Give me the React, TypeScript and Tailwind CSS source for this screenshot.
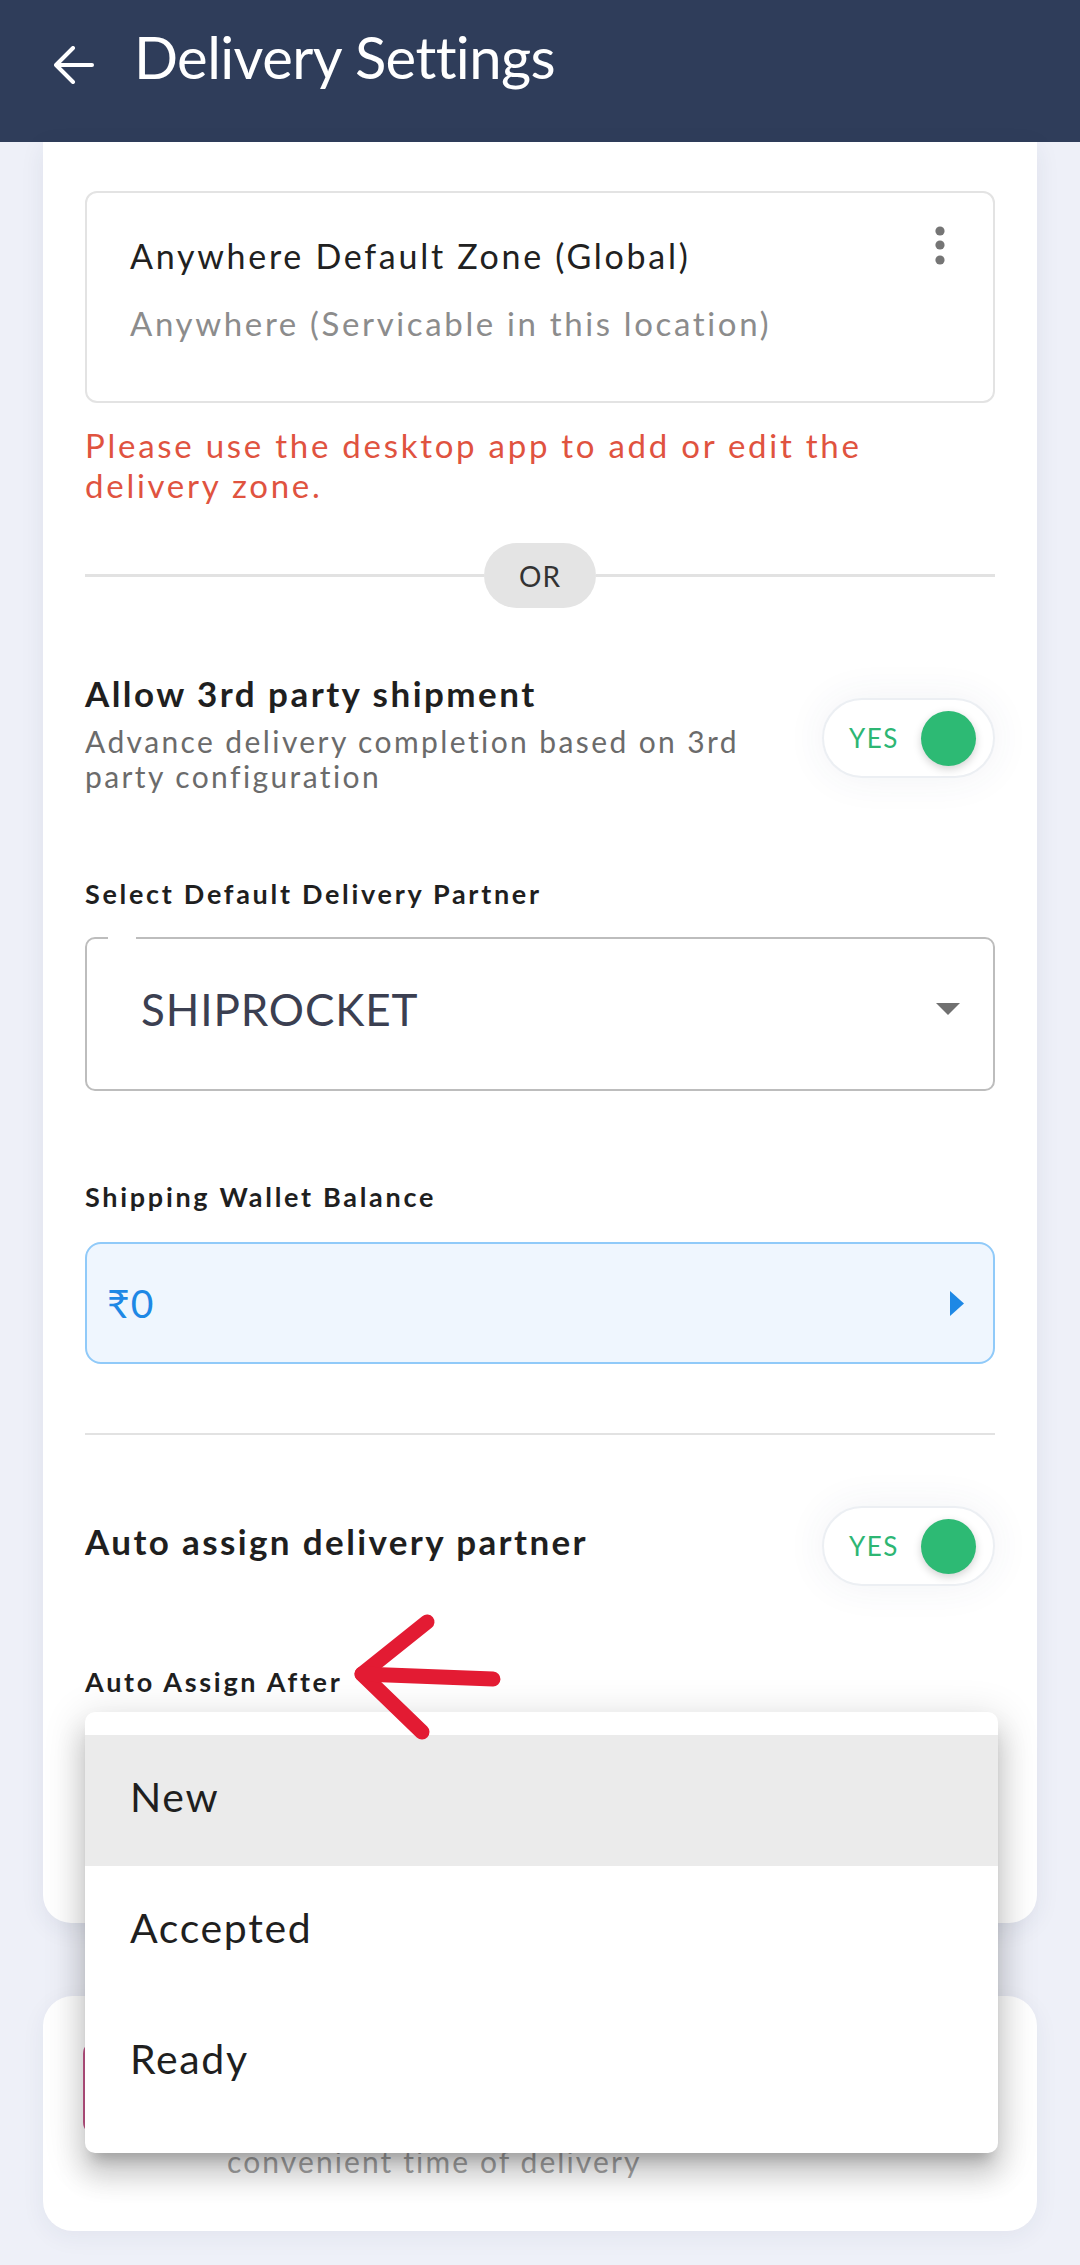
import React from "react";

const Toggle = () => (
  <div className="flex h-[80px] w-[173px] shrink-0 items-center justify-between rounded-full border-2 border-[#eceff3] bg-white pl-[25px] pr-[17px] shadow-[0_0_40px_rgba(60,70,110,0.07)]">
    <span className="text-[26px] leading-none tracking-[0.06em] text-[#2db673]">YES</span>
    <span className="h-[55px] w-[55px] rounded-full bg-[#2dba74] shadow-[0_3px_8px_rgba(0,0,0,0.18)]" />
  </div>
);

const menuItems = ["New", "Accepted", "Ready"];

export default function App() {
  return (
    <div className="relative min-h-[2265px] bg-[#eef0f8] font-[Lato,sans-serif] pb-[37px]">
      {/* header */}
      <div className="flex h-[142px] items-start bg-[#2f3d5a] pl-[54px] pt-[28px]">
        <svg
          width="40"
          height="38"
          viewBox="0 0 40 38"
          className="mt-[18px] shrink-0"
          fill="none"
          stroke="white"
          strokeWidth="4"
          strokeLinecap="round"
          strokeLinejoin="round"
        >
          <path d="M38 19H3" />
          <path d="M19 2L2 19L19 36" />
        </svg>
        <h1 className="ml-[40px] text-[58px] font-normal leading-none tracking-[-0.01em] text-white">
          Delivery Settings
        </h1>
      </div>

      {/* main card */}
      <div className="mx-[43px] rounded-b-[28px] bg-white px-[42px] pb-[44px] pt-[49px] shadow-[0_6px_24px_rgba(40,50,90,0.08)]">
        <div className="flex h-[212px] items-start justify-between rounded-[12px] border-2 border-[#e3e3e3] pl-[43px] pr-[48px]">
          <div className="pt-[46px]">
            <div className="text-[34px] leading-none tracking-[0.08em] text-[#212121]">
              Anywhere Default Zone (Global)
            </div>
            <div className="mt-[34px] text-[33px] leading-none tracking-[0.08em] text-[#8c8c8c]">
              Anywhere (Servicable in this location)
            </div>
          </div>
          <svg width="10" height="40" viewBox="0 0 10 40" className="mt-[32px] shrink-0" fill="#757575">
            <circle cx="5" cy="6" r="4.6" />
            <circle cx="5" cy="20" r="4.6" />
            <circle cx="5" cy="35" r="4.6" />
          </svg>
        </div>

        <p className="mt-[22px] text-[33px] leading-[40px] tracking-[0.083em] text-[#e0533f]">
          Please use the desktop app to add or edit the
          <br />
          delivery zone.
        </p>

        <div className="mt-[38px] flex h-[65px] items-center">
          <div className="h-[3px] flex-1 bg-[#e2e2e2]" />
          <div className="flex h-[65px] w-[112px] items-center justify-center rounded-full bg-[#e4e4e4] text-[28px] leading-none tracking-[0.04em] text-[#333]">
            OR
          </div>
          <div className="h-[3px] flex-1 bg-[#e2e2e2]" />
        </div>

        <div className="mt-[68px] flex items-start justify-between">
          <div>
            <div className="text-[35px] font-bold leading-none tracking-[0.07em] text-[#1f1f1f]">
              Allow 3rd party shipment
            </div>
            <p className="mt-[13px] text-[30px] leading-[35px] tracking-[0.08em] text-[#6b6b6b]">
              Advance delivery completion based on 3rd
              <br />
              party configuration
            </p>
          </div>
          <div className="mt-[22px]">
            <Toggle />
          </div>
        </div>

        <div className="mt-[86px] text-[27px] font-bold leading-none tracking-[0.1em] text-[#1f1f1f]">
          Select Default Delivery Partner
        </div>
        <div className="relative mt-[30px] flex h-[154px] items-center justify-between rounded-[10px] border-2 border-[#bdbdbd] pb-[10px] pl-[54px] pr-[33px]">
          <span className="absolute left-[21px] top-[-2px] h-[2px] w-[28px] bg-white" />
          <span className="text-[44px] leading-none tracking-[0.02em] text-[#3b3f51]">SHIPROCKET</span>
          <svg width="24" height="12" viewBox="0 0 24 12" fill="#707070">
            <path d="M0 0H24L12 12Z" />
          </svg>
        </div>

        <div className="mt-[92px] text-[27px] font-bold leading-none tracking-[0.1em] text-[#1f1f1f]">
          Shipping Wallet Balance
        </div>
        <div className="mt-[32px] flex h-[122px] items-center justify-between rounded-[16px] border-2 border-[#90caf9] bg-[#eff6fe] pl-[20px] pr-[29px]">
          <span className="text-[39px] leading-none tracking-[0.03em] text-[#1e88e5]">₹0</span>
          <svg width="14" height="25" viewBox="0 0 14 25" fill="#1e88e5">
            <path d="M0 0L14 12.5L0 25Z" />
          </svg>
        </div>

        <div className="mt-[69px] h-[2px] bg-[#e2e2e2]" />

        <div className="mt-[71px] flex items-start justify-between">
          <div className="mt-[18px] text-[35px] font-bold leading-none tracking-[0.068em] text-[#1f1f1f]">
            Auto assign delivery partner
          </div>
          <Toggle />
        </div>

        <div className="mt-[82px] text-[27px] font-bold leading-none tracking-[0.1em] text-[#1f1f1f]">
          Auto Assign After
        </div>
        {/* select sitting under the open menu */}
        <div className="mt-[30px] h-[154px] rounded-[10px] border-2 border-[#bdbdbd]" />
      </div>

      {/* second card, mostly covered by the menu */}
      <div className="mx-[43px] mt-[73px] flex h-[235px] items-start rounded-[30px] bg-white pl-[40px] pt-[44px] shadow-[0_6px_24px_rgba(40,50,90,0.06)]">
        <div className="h-[96px] w-[96px] shrink-0 rounded-[14px] border-[3px] border-[#c5578a] bg-[#fde8f0]" />
        <p className="ml-[48px] mt-[103px] text-[30px] leading-[36px] tracking-[0.07em] text-[#a3a3a3]">
          convenient time of delivery
        </p>
      </div>

      {/* open select menu */}
      <div className="absolute left-[85px] top-[1712px] z-10 w-[913px] rounded-[10px] bg-white pb-[25px] pt-[23px] shadow-[0_14px_14px_-8px_rgba(0,0,0,0.2),0_22px_28px_3px_rgba(0,0,0,0.14),0_8px_38px_6px_rgba(0,0,0,0.12)]">
        {menuItems.map((item, i) => (
          <div
            key={item}
            className={`flex h-[131px] items-center pb-[8px] pl-[45px] text-[41px] leading-none tracking-[0.04em] text-[#1f1f1f] ${
              i === 0 ? "bg-[#ebebeb]" : ""
            }`}
          >
            {item}
          </div>
        ))}
      </div>

      {/* red annotation arrow */}
      <svg
        width="180"
        height="150"
        viewBox="0 0 180 150"
        className="absolute left-[340px] top-[1600px] z-20"
        fill="none"
        stroke="#e31b33"
        strokeWidth="15"
        strokeLinecap="round"
        strokeLinejoin="round"
      >
        <path d="M87 22L22 74L82 132" />
        <path d="M22 74L153 79" />
      </svg>
    </div>
  );
}
